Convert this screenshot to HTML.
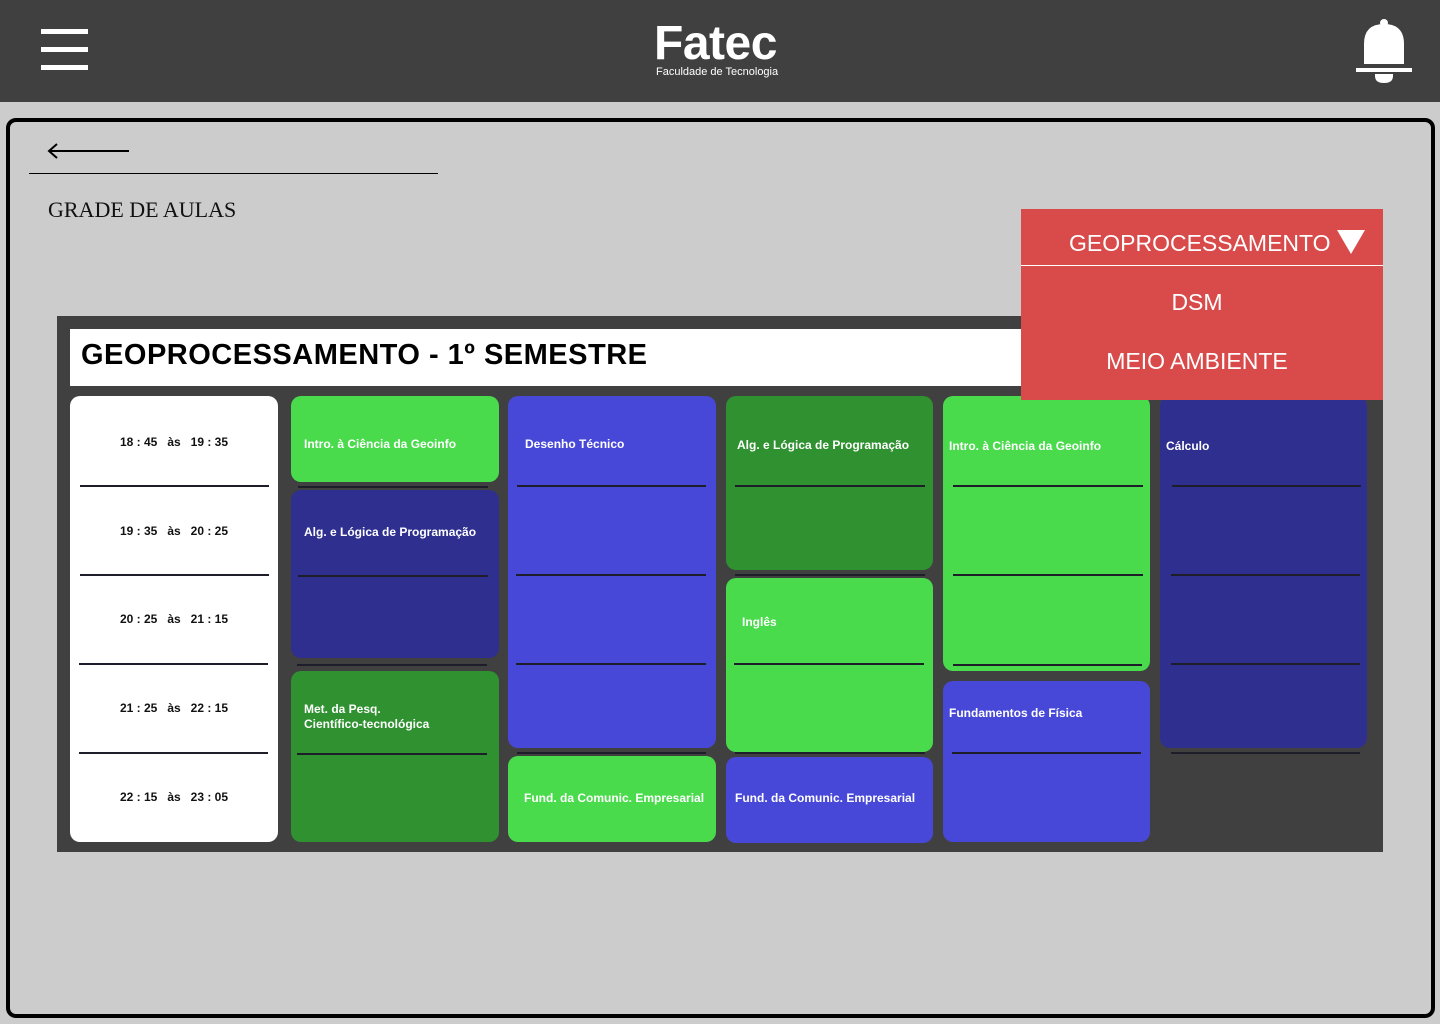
<!DOCTYPE html>
<html><head><meta charset="utf-8"><style>
*{margin:0;padding:0;box-sizing:border-box}
body{width:1440px;height:1024px;background:#cccccc;position:relative;overflow:hidden;font-family:"Liberation Sans",sans-serif}
.a{position:absolute}
.hdr{left:0;top:0;width:1440px;height:102px;background:#404040}
.bar{left:41px;width:47px;height:5px;background:#fff}
.card{left:6px;top:118px;width:1429px;height:900px;border:4px solid #000;border-radius:10px}
.blk{border-radius:10px;color:#fff;font-size:12px;font-weight:bold;padding-left:13px}
.g{background:#4adb4d}.dg{background:#2f9130}.n{background:#2f2f8f}.b{background:#4848d8}
.ln{height:2px;background:#1e1e2a}
.tm{left:70px;width:208px;text-align:center;font-size:12px;font-weight:bold;color:#111;white-space:pre}
.dd{color:#fff;font-size:23px;text-align:center;width:352px;left:1021px}
</style></head><body>
<div class="a hdr"></div>
<div class="a bar" style="top:29px"></div>
<div class="a bar" style="top:47px"></div>
<div class="a bar" style="top:65px"></div>
<div class="a" style="left:654px;top:20px;color:#fff;font-size:48px;font-weight:bold;line-height:1;letter-spacing:-0.5px">Fatec</div>
<div class="a" style="left:656px;top:66px;color:#fff;font-size:11px">Faculdade de Tecnologia</div>
<svg class="a" style="left:1355px;top:18px" width="58" height="66" viewBox="0 0 58 66"><circle cx="29" cy="5" r="4" fill="#fff"/><path d="M9 46 L9 26 Q9 6 29 6 Q49 6 49 26 L49 46 Z" fill="#fff"/><rect x="1" y="50" width="56" height="4" fill="#fff"/><path d="M20 56 L38 56 L38 58 Q38 65 29 65 Q20 65 20 58Z" fill="#fff"/></svg>

<div class="a card"></div>
<svg class="a" style="left:46px;top:142px" width="86" height="18"><path d="M3 9 H83 M11 2 L3 9 L11 16" stroke="#000" stroke-width="2" fill="none"/></svg>
<div class="a" style="left:29px;top:173px;width:409px;height:1px;background:#000"></div>
<div class="a" style="left:48px;top:197px;font-family:'Liberation Serif',serif;font-size:22px;color:#111">GRADE DE AULAS</div>

<div class="a" style="left:57px;top:316px;width:1326px;height:536px;background:#404040"></div>
<div class="a" style="left:70px;top:329px;width:1000px;height:57px;background:#fff"></div>
<div class="a" style="left:81px;top:339px;font-size:29px;font-weight:bold;color:#000;letter-spacing:0.5px">GEOPROCESSAMENTO - 1º SEMESTRE</div>

<div class="a" style="left:70px;top:396px;width:208px;height:446px;background:#fff;border-radius:10px"></div>
<div class="a tm" style="top:435px">18 : 45   às   19 : 35</div>
<div class="a tm" style="top:524px">19 : 35   às   20 : 25</div>
<div class="a tm" style="top:612px">20 : 25   às   21 : 15</div>
<div class="a tm" style="top:701px">21 : 25   às   22 : 15</div>
<div class="a tm" style="top:790px">22 : 15   às   23 : 05</div>

<div class="a blk g" style="left:291px;top:396px;width:208px;height:86px;padding-top:41px">Intro. à Ciência da Geoinfo</div>
<div class="a blk n" style="left:291px;top:490px;width:208px;height:168px;padding-top:35px">Alg. e Lógica de Programação</div>
<div class="a blk dg" style="left:291px;top:671px;width:208px;height:171px;padding-top:31px;line-height:15px">Met. da Pesq.<br>Científico-tecnológica</div>

<div class="a blk b" style="left:508px;top:396px;width:208px;height:352px;padding-top:41px;padding-left:17px">Desenho Técnico</div>
<div class="a blk g" style="left:508px;top:756px;width:208px;height:86px;padding-top:35px;padding-left:16px">Fund. da Comunic. Empresarial</div>

<div class="a blk dg" style="left:726px;top:396px;width:207px;height:174px;padding-top:42px;padding-left:11px">Alg. e Lógica de Programação</div>
<div class="a blk g" style="left:726px;top:578px;width:207px;height:174px;padding-top:37px;padding-left:16px">Inglês</div>
<div class="a blk b" style="left:726px;top:757px;width:207px;height:86px;padding-top:34px;padding-left:9px">Fund. da Comunic. Empresarial</div>

<div class="a blk g" style="left:943px;top:396px;width:207px;height:275px;padding-top:43px;padding-left:6px">Intro. à Ciência da Geoinfo</div>
<div class="a blk b" style="left:943px;top:681px;width:207px;height:161px;padding-top:25px;padding-left:6px">Fundamentos de Física</div>

<div class="a blk n" style="left:1160px;top:396px;width:207px;height:352px;padding-top:43px;padding-left:6px">Cálculo</div>

<div class="a ln" style="left:80px;top:485px;width:189px"></div>
<div class="a ln" style="left:80px;top:574px;width:189px"></div>
<div class="a ln" style="left:79px;top:663px;width:189px"></div>
<div class="a ln" style="left:79px;top:752px;width:189px"></div>
<div class="a ln" style="left:298px;top:486px;width:190px"></div>
<div class="a ln" style="left:298px;top:575px;width:190px"></div>
<div class="a ln" style="left:297px;top:664px;width:190px"></div>
<div class="a ln" style="left:297px;top:753px;width:190px"></div>
<div class="a ln" style="left:517px;top:485px;width:189px"></div>
<div class="a ln" style="left:516px;top:574px;width:190px"></div>
<div class="a ln" style="left:516px;top:663px;width:190px"></div>
<div class="a ln" style="left:517px;top:752px;width:189px"></div>
<div class="a ln" style="left:735px;top:485px;width:190px"></div>
<div class="a ln" style="left:735px;top:574px;width:190px"></div>
<div class="a ln" style="left:734px;top:663px;width:190px"></div>
<div class="a ln" style="left:735px;top:752px;width:190px"></div>
<div class="a ln" style="left:953px;top:485px;width:190px"></div>
<div class="a ln" style="left:953px;top:574px;width:190px"></div>
<div class="a ln" style="left:953px;top:664px;width:189px"></div>
<div class="a ln" style="left:952px;top:752px;width:189px"></div>
<div class="a ln" style="left:1172px;top:485px;width:189px"></div>
<div class="a ln" style="left:1171px;top:574px;width:189px"></div>
<div class="a ln" style="left:1171px;top:663px;width:189px"></div>
<div class="a ln" style="left:1171px;top:752px;width:189px"></div>

<div class="a" style="left:1021px;top:209px;width:362px;height:191px;background:#d94a4a"></div>
<div class="a" style="left:1021px;top:265px;width:362px;height:1px;background:#fff"></div>
<div class="a" style="left:1069px;top:230px;color:#fff;font-size:23px;letter-spacing:0px">GEOPROCESSAMENTO</div>
<svg class="a" style="left:1336px;top:229px" width="30" height="26"><path d="M1 1 H29 L15 25Z" fill="#fff"/></svg>
<div class="a dd" style="top:289px">DSM</div>
<div class="a dd" style="top:348px">MEIO AMBIENTE</div>
</body></html>
